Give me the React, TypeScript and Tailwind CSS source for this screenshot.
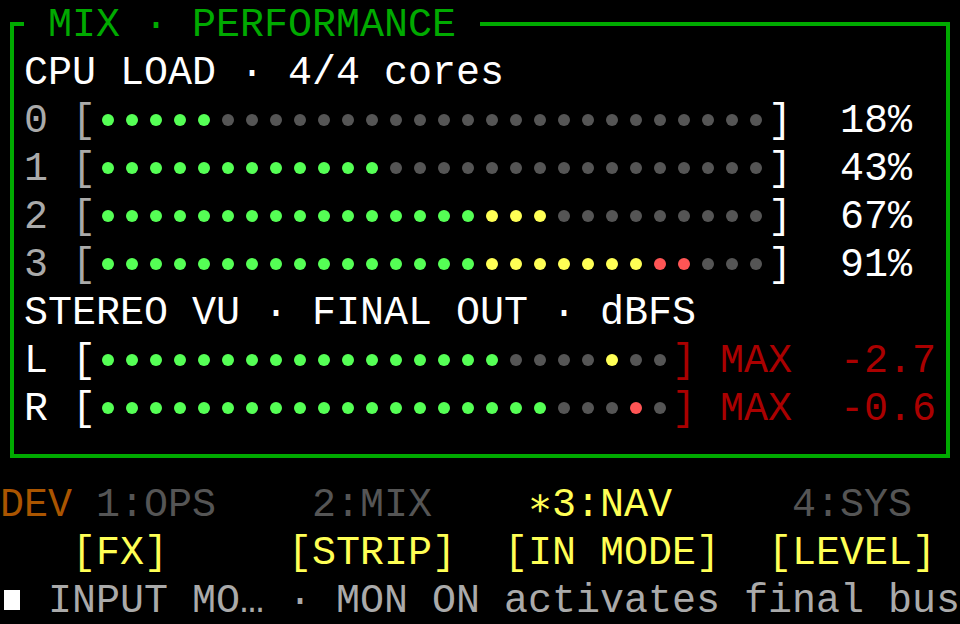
import type { ReactNode } from 'react';

// CGA-style palette, written out so tailwind picks them up
const col = {
  white: 'text-white',
  light: 'text-[#aaaaaa]',
  dim: 'text-[#555555]',
  green: 'text-[#00aa00]',
  yellow: 'text-[#ffff55]',
  red: 'text-[#aa0000]',
  brown: 'text-[#aa5500]',
};

const dot = {
  green: 'bg-[#55ff55]',
  yellow: 'bg-[#ffff55]',
  red: 'bg-[#ff5555]',
  off: 'bg-[#555555]',
};

type DotColor = keyof typeof dot;

const Row = ({ children }: { children: ReactNode }) => <div className="flex h-[48px]">{children}</div>;

// one character per 24px cell, like the terminal grid
const T = ({ text, color }: { text: string; color: string }) => (
  <>
    {Array.from(text).map((ch, i) => (
      <span key={i} className={`inline-block w-[24px] shrink-0 translate-y-[2px] text-center ${color}`}>
        {ch === ' ' ? '\u00a0' : ch}
      </span>
    ))}
  </>
);

const Dot = ({ c }: { c: DotColor }) => (
  <span className="flex h-[48px] w-[24px] shrink-0 items-center justify-center">
    <span className={`h-[12px] w-[12px] rounded-full ${dot[c]}`} />
  </span>
);

function cpuDots(lit: number): DotColor[] {
  return Array.from({ length: 28 }, (_, i) => {
    if (i >= lit) return 'off';
    if (i < 16) return 'green';
    if (i < 23) return 'yellow';
    return 'red';
  });
}

function vuDots(lit: number, peak: number, peakColor: DotColor): DotColor[] {
  return Array.from({ length: 24 }, (_, i) => {
    if (i === peak) return peakColor;
    return i < lit ? 'green' : 'off';
  });
}

const cores = [
  { id: '0', pct: 18 },
  { id: '1', pct: 43 },
  { id: '2', pct: 67 },
  { id: '3', pct: 91 },
];

const vu = [
  { ch: 'L', dots: vuDots(17, 21, 'yellow'), max: '-2.7' },
  { ch: 'R', dots: vuDots(19, 22, 'red'), max: '-0.6' },
];

export default function App() {
  return (
    <div className="h-[624px] w-[960px] overflow-hidden bg-black font-['Liberation_Mono','DejaVu_Sans_Mono',monospace] text-[40px] leading-[48px]">
      {/* Performance box */}
      <div className="relative ml-[10px] mt-[22px] h-[436px] w-[940px] border-4 border-[#00aa00] pl-[10px] pt-[22px]">
        <div className="absolute left-[10px] top-[-26px] flex h-[48px] bg-black">
          <T text=" MIX · PERFORMANCE " color={col.green} />
        </div>

        <Row>
          <T text="CPU LOAD · 4/4 cores" color={col.white} />
        </Row>
        {cores.map((c) => (
          <Row key={c.id}>
            <T text={`${c.id} [`} color={col.light} />
            {cpuDots(Math.round((c.pct / 100) * 28)).map((d, i) => (
              <Dot key={i} c={d} />
            ))}
            <T text="]" color={col.white} />
            <T text={`  ${c.pct}%`} color={col.white} />
          </Row>
        ))}

        <Row>
          <T text="STEREO VU · FINAL OUT · dBFS" color={col.white} />
        </Row>
        {vu.map((v) => (
          <Row key={v.ch}>
            <T text={`${v.ch} [`} color={col.white} />
            {v.dots.map((d, i) => (
              <Dot key={i} c={d} />
            ))}
            <T text={`] MAX  ${v.max}`} color={col.red} />
          </Row>
        ))}
      </div>

      {/* Tabs */}
      <div className="mt-[22px]">
        <Row>
          <T text="DEV" color={col.brown} />
          <T text=" 1:OPS    2:MIX    " color={col.dim} />
          <T text="∗3:NAV" color={col.yellow} />
          <T text="     4:SYS" color={col.dim} />
        </Row>
        <Row>
          <T text="   [FX]     [STRIP]  [IN MODE]  [LEVEL]" color={col.yellow} />
        </Row>
        <Row>
          <span className="flex h-[48px] w-[24px] shrink-0 items-center justify-center">
            <span className="h-[20px] w-[16px] bg-white" />
          </span>
          <T text=" INPUT MO… · MON ON activates final bus" color={col.light} />
        </Row>
      </div>
    </div>
  );
}
